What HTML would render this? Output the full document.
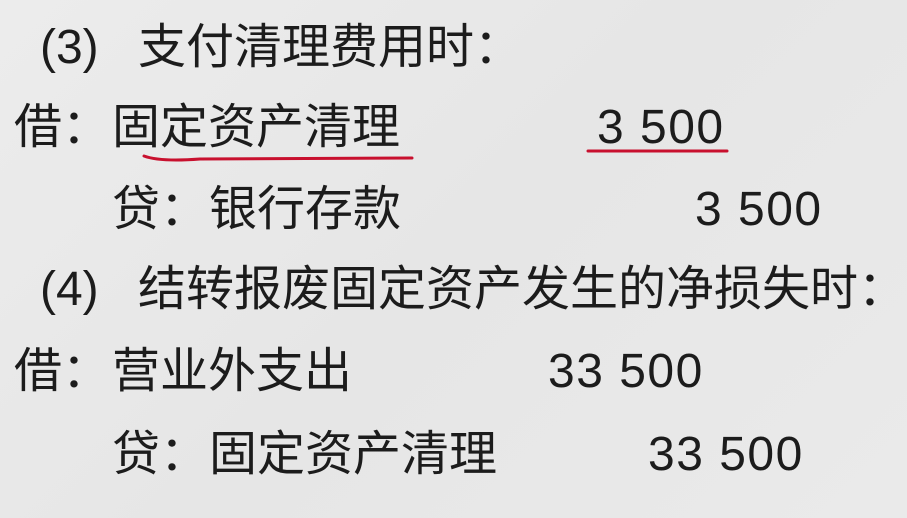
<!DOCTYPE html>
<html><head><meta charset="utf-8"><style>
html,body{margin:0;padding:0}
body{width:907px;height:518px;overflow:hidden;background:linear-gradient(135deg,#ececec,#e6e6e6 50%,#eaeaea);position:relative;font-family:"Liberation Sans","Noto Sans CJK SC",sans-serif;color:#1c1c1c}
.t{position:absolute;font-size:48px;line-height:56px;white-space:nowrap}
.n{font-size:48px;letter-spacing:1.5px}
</style></head><body>
<div class="t" style="left:40px;top:20px">(3)</div>
<div class="t" style="left:138px;top:20px">支付清理费用时：</div>
<div class="t" style="left:14px;top:100px">借：</div>
<div class="t" style="left:112px;top:100px">固定资产清理</div>
<div class="t n" style="left:597px;top:100px">3 500</div>
<div class="t" style="left:112px;top:182px">贷：</div>
<div class="t" style="left:209px;top:182px">银行存款</div>
<div class="t n" style="left:695px;top:182px">3 500</div>
<div class="t" style="left:40px;top:262px">(4)</div>
<div class="t" style="left:138px;top:262px">结转报废固定资产发生的净损失时：</div>
<div class="t" style="left:14px;top:344px">借：</div>
<div class="t" style="left:112px;top:344px">营业外支出</div>
<div class="t n" style="left:548px;top:344px">33 500</div>
<div class="t" style="left:112px;top:427px">贷：</div>
<div class="t" style="left:209px;top:427px">固定资产清理</div>
<div class="t n" style="left:648px;top:427px">33 500</div>
<svg style="position:absolute;left:0;top:0" width="907" height="518">
<path d="M144 156 Q160 162 200 159 L412 158" stroke="#c8102e" stroke-width="3" fill="none" stroke-linecap="round"/>
<path d="M588 151 L727 151" stroke="#c8102e" stroke-width="3" fill="none" stroke-linecap="round"/>
</svg>
</body></html>
